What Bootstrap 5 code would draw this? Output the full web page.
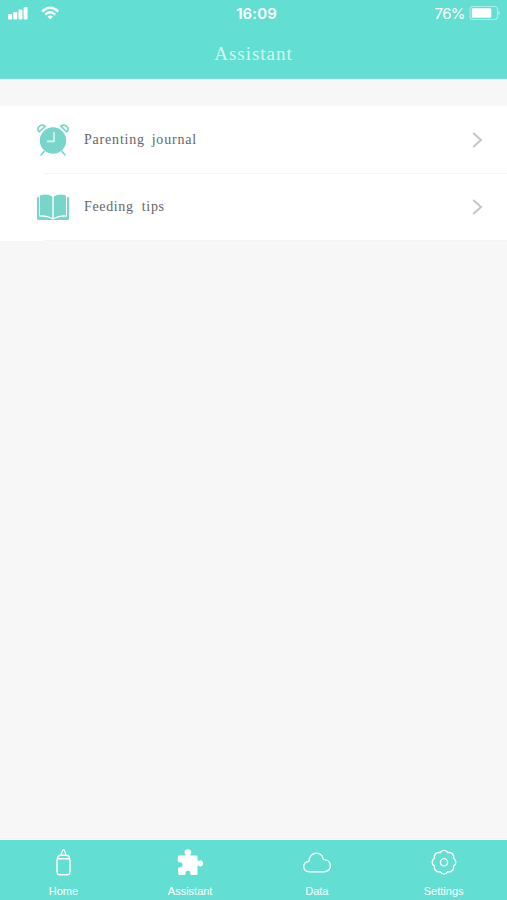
<!DOCTYPE html>
<html lang="en">
<head>
<meta charset="utf-8">
<meta name="viewport" content="width=device-width, initial-scale=1">
<title>Assistant</title>
<link href="https://cdn.jsdelivr.net/npm/bootstrap@5.3.0/dist/css/bootstrap.min.css" rel="stylesheet">
<style>
body{background:#f7f7f7;font-family:Inter,"Liberation Sans",sans-serif;height:900px;overflow:hidden}
.app-top{background:#62dfd2;height:79px;color:#fff;border-bottom:1px solid #72e0d5}
.status-line{height:28px;padding:0 6px 0 7px;display:grid;grid-template-columns:1fr auto 1fr}
.clock{font-size:15px;font-weight:600;letter-spacing:.1px;line-height:28px;padding-left:5px}
.percent{font-size:15px;line-height:28px;letter-spacing:-.6px;margin-right:4px}
.page-title{font:19px/52px "Liberation Serif",serif;letter-spacing:1px;color:#d0f6f2}
.menu-list{margin-top:27px;background:#fff;height:135px}
.menu-row{height:67px;padding-top:1px;padding-left:36px;padding-right:23px;color:#666}
.menu-row + .rule + .menu-row{height:66px;padding-top:0}
.menu-row svg{flex:none}
.menu-text{font:14px/20px "Liberation Serif",serif;margin-left:14px}
.journal{letter-spacing:.8px;word-spacing:2.5px}
.tips{letter-spacing:.65px;word-spacing:4px}
.rule{height:1px;margin-left:44px;background:#f4f4f4}
.tab-bar{height:61px;background:#62dfd2;border-top:1px solid #fff}
.tab-item{color:#fff;text-decoration:none;font:11px/14px "Liberation Sans",Arial,sans-serif;padding-top:9px}
.tab-item span{margin-top:7px}
.tab-item svg{height:28px;width:32px}
</style>
<script src="https://cdn.jsdelivr.net/npm/bootstrap@5.3.0/dist/js/bootstrap.bundle.min.js"></script>
</head>
<body class="d-flex flex-column m-0">
<header class="app-top flex-shrink-0">
  <div class="status-line">
    <div class="d-flex align-items-center">
      <svg width="54" height="28" viewBox="0 0 54 28" fill="#fff"><rect x="1" y="14" width="4" height="5.5" rx="1"/><rect x="6.2" y="12" width="4" height="7.5" rx="1"/><rect x="11.4" y="9.6" width="4" height="9.9" rx="1"/><rect x="16.6" y="7" width="4" height="12.5" rx="1"/><g fill="none" stroke="#fff" stroke-width="2.4"><path d="M35.2 11.5Q43.2 4 51.2 11.5"/><path d="M38.2 14.6Q43.2 9.8 48.2 14.6"/></g><path d="M40.5 16.6Q43.2 14.2 45.9 16.6L43.2 19.4Z"/></svg>
    </div>
    <div class="clock">16:09</div>
    <div class="d-flex justify-content-end align-items-center">
      <span class="percent">76%</span>
      <svg width="32" height="28" viewBox="0 0 32 28"><rect x="1" y="6.5" width="27.5" height="13" rx="3" fill="none" stroke="#a9eee7" stroke-width="1.1"/><rect x="2.8" y="8.3" width="19.5" height="9.5" rx="1.3" fill="#fff"/><path d="M29.5 10.8q3 2.2 0 4.4z" fill="#b8f1eb"/></svg>
    </div>
  </div>
  <div class="page-title text-center">Assistant</div>
</header>
<main class="flex-grow-1">
  <div class="menu-list">
    <a href="#" class="menu-row d-flex align-items-center text-decoration-none">
      <svg width="34" height="34" viewBox="0 0 34 34" fill="none" stroke="#78d5ca" stroke-linecap="round" stroke-linejoin="round"><circle cx="17" cy="17.5" r="13.2" fill="#78d5ca" stroke="none"/><path d="M3.2 8.8C-1 5.2 5 .2 9.3 3.2ZM30.8 8.8C35 5.2 29 .2 24.7 3.2Z" stroke-width="1.6"/><path d="M8.2 28.3 5 32M25.8 28.3 29 32" stroke-width="1.6"/><path d="M18 9.5v8.9h-6.4" stroke="#d5f5f1" stroke-width="1.7"/></svg>
      <span class="menu-text journal">Parenting journal</span>
      <svg class="ms-auto" width="12" height="18" viewBox="0 0 12 18" fill="none" stroke="#c5c5c7" stroke-width="2"><path d="m1.2 2 7.8 7-7.8 7"/></svg>
    </a>
    <div class="rule"></div>
    <a href="#" class="menu-row d-flex align-items-center text-decoration-none">
      <svg width="34" height="34" viewBox="0 0 34 34"><path d="M3 7H2.2Q1 7 1 8.2V28.8Q1 30 2.2 30H31.8Q33 30 33 28.8V8.2Q33 7 31.8 7H31V26.5Q22 26.5 17 29.4Q12 26.5 3 26.5Z" fill="#78d5ca"/><path d="M4 5.5Q11 3.3 16.3 6.6V28Q11 24.7 4 25.4ZM30 5.5Q23 3.3 17.7 6.6V28Q23 24.7 30 25.4Z" fill="#78d5ca"/></svg>
      <span class="menu-text tips">Feeding tips</span>
      <svg class="ms-auto" width="12" height="18" viewBox="0 0 12 18" fill="none" stroke="#c5c5c7" stroke-width="2"><path d="m1.2 2 7.8 7-7.8 7"/></svg>
    </a>
    <div class="rule"></div>
  </div>
</main>
<nav class="tab-bar row g-0 flex-shrink-0 text-center">
  <a href="#" class="tab-item col d-flex flex-column align-items-center">
    <svg viewBox="-.5 0 32 28" fill="none" stroke="#fff" stroke-width="1.4" stroke-linejoin="round"><path d="M13 6.2C15 5.2 13.7 1.4 16 .6 18.3 1.4 17 5.2 19 6.2M9.8 9.7Q10 6.5 13.2 6.3H18.8Q22 6.5 22.2 9.7ZM9.5 10.5V22.5Q9.5 25.8 12.5 25.8H19.5Q22.5 25.8 22.5 22.5V10.5"/></svg>
    <span>Home</span></a>
  <a href="#" class="tab-item col d-flex flex-column align-items-center">
    <svg viewBox="0 0 32 28" fill="#fff"><path d="M5 6.5H10.8C11.7 6.5 11.7 5.8 11.2 5.1 9.5 2.6 11.2.2 13.8.2S18.2 2.6 16.6 5.1C16 5.8 16.2 6.5 17 6.5H22.2Q23.5 6.5 23.5 7.8V11.3C23.5 12.2 24.2 12.3 25 11.7 27 10.2 29.2 11.9 29.2 14.3S27 18.3 25 16.9C24.2 16.3 23.5 16.5 23.5 17.3V24.7Q23.5 26 22.2 26H17.2C16.3 26 16.3 25.3 16.4 24.6 16.5 22.7 15.5 21.7 13.9 21.7S11.2 22.7 11.4 24.6C11.5 25.3 11.4 26 10.5 26H5.4Q4.2 26 4.2 24.8V19.3C4.2 18.5 4.7 18.3 5.5 18.4 7.5 18.6 8.6 17.5 8.6 15.8S7.5 13 5.5 13.2C4.7 13.3 3.8 13.1 3.8 12.2V7.7Q3.8 6.5 5 6.5Z"/></svg>
    <span>Assistant</span></a>
  <a href="#" class="tab-item col d-flex flex-column align-items-center">
    <svg viewBox="0 0 32 28" fill="none" stroke="#fff" stroke-width="1.4"><path d="M8.5 22.7C.8 22.7.8 12.9 8 12.2 8.5 2.2 20.8 1.5 22.5 10.6 31.5 10.4 31.4 22.7 23.5 22.7Z"/></svg>
    <span>Data</span></a>
  <a href="#" class="tab-item col d-flex flex-column align-items-center">
    <svg viewBox="0 0 32 28" fill="none" stroke="#fff" stroke-width="1.4" stroke-linejoin="round"><path transform="translate(16 13.2)" d="M-3.94-9.5A4.5 4.5 0 0 1 3.94-9.5A4.5 4.5 0 0 1 9.5-3.94A4.5 4.5 0 0 1 9.5 3.94A4.5 4.5 0 0 1 3.94 9.5A4.5 4.5 0 0 1-3.94 9.5A4.5 4.5 0 0 1-9.5 3.94A4.5 4.5 0 0 1-9.5-3.94A4.5 4.5 0 0 1-3.94-9.5Z"/><circle cx="16" cy="13.2" r="3.6"/></svg>
    <span>Settings</span></a>
</nav>
</body>
</html>
